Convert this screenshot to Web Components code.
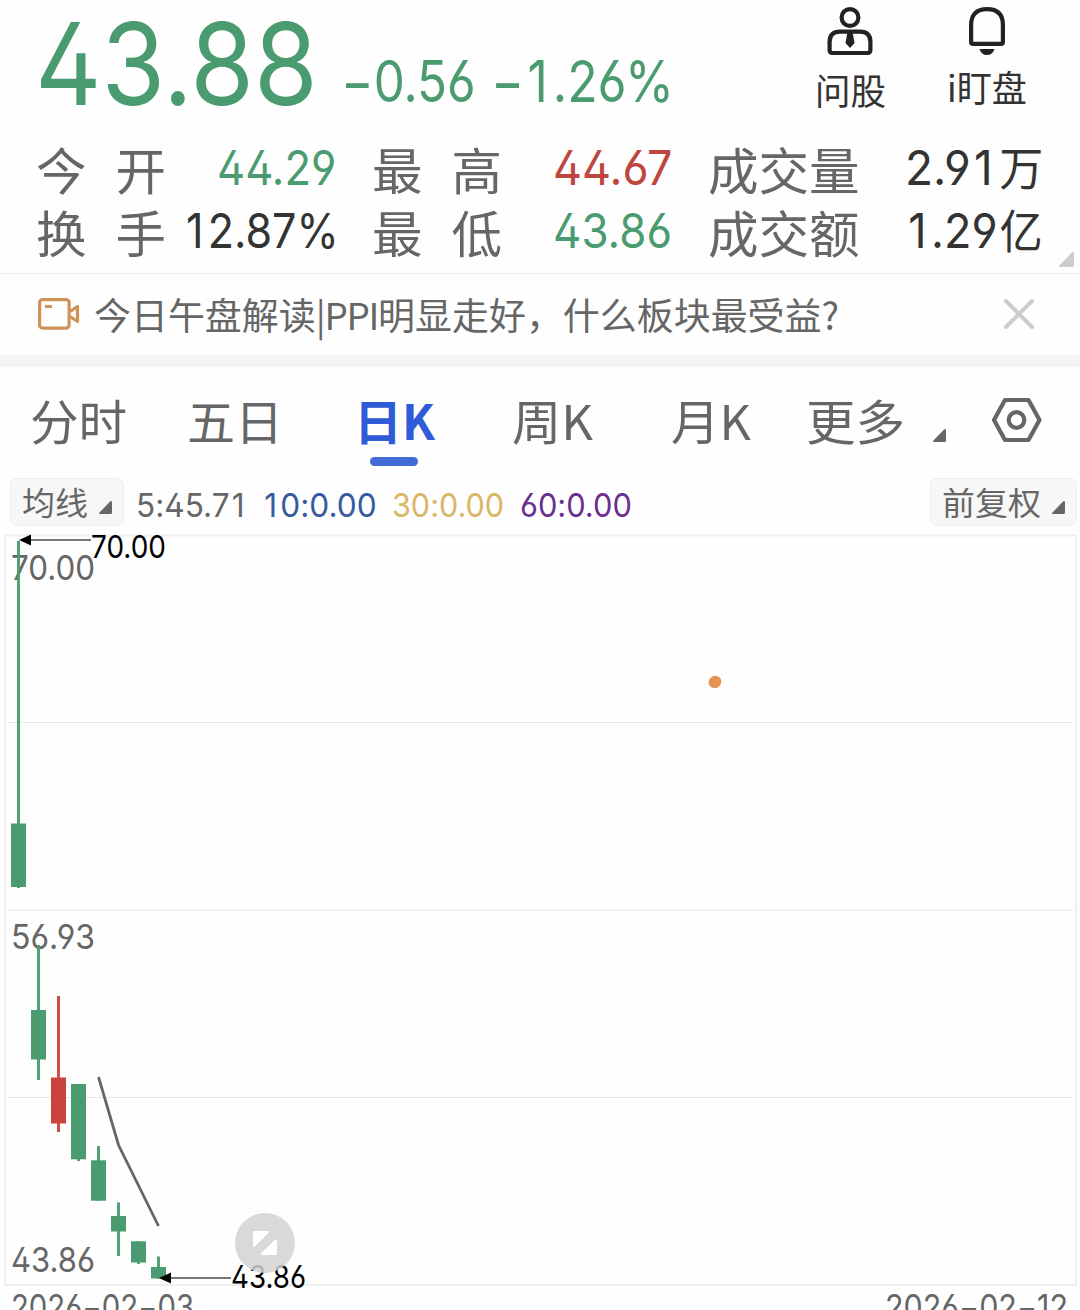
<!DOCTYPE html>
<html lang="zh-CN">
<head>
<meta charset="utf-8">
<meta name="viewport" content="width=1080">
<title>日K</title>
<style>
    :root {
        --up: #bf4640;
        --down: #4b9b70;
        --fg: #333;
        --muted: #666;
        --accent: #2f5bd8;
        --cjk: "Noto Sans CJK SC", sans-serif;
        --num: Inter, "Noto Sans CJK SC", sans-serif;
        --digits: "calt" 0, "cv02", "cv03", "cv04";
    }
    html, body { margin: 0; height: 1310px; overflow: hidden; background: #fefefe; }
    body { font-family: var(--cjk); color: var(--muted); }
</style>
</head>
<body>
<stock-page></stock-page>

<script>
/**
 * <fit-text w="120"> — one line of text, condensed or widened to exactly w pixels.
 * A slotted <i> holds a narrow digit and gets the room of a full one.
 */
class FitText extends HTMLElement {
    connectedCallback() {
        if (this._init) return; this._init = true;
        const root = this.attachShadow({ mode: 'open' });
        const w = Number(this.getAttribute('w'));
        root.innerHTML = `<style>
            :host { display: block; width: ${w}px; white-space: nowrap; line-height: 1; }
            span { display: inline-block; transform-origin: 0 50%; font-feature-settings: var(--digits); }
            ::slotted(i) { font-style: normal; padding: 0 .1em 0 .07em; }
        </style><span><slot></slot></span>`;
        const span = root.querySelector('span');
        span.style.transform = `scaleX(${w / span.offsetWidth})`;
    }
}

/** <corner-mark> — the small triangle that marks something expandable. */
class CornerMark extends HTMLElement {
    connectedCallback() {
        if (this._init) return; this._init = true;
        this.attachShadow({ mode: 'open' }).innerHTML = `<style>
            :host { display: block; width: 13px; height: 13px; }
            svg { display: block; width: 100%; height: 100%; }
        </style>
        <svg viewBox="0 0 13 13"><path d="M11.3.3Q13-.6 13 1.5V11.5Q13 13 11.5 13H1Q-.8 13 .5 11.5Z" fill="currentColor"/></svg>`;
    }
}

/** <quote-header> — last price, change, and the two shortcut buttons. */
class QuoteHeader extends HTMLElement {
    connectedCallback() {
        if (this._init) return; this._init = true;
        this.attachShadow({ mode: 'open' }).innerHTML = `<style>
            :host { display: flex; height: 136px; box-sizing: border-box; padding-left: 35px; color: var(--down);
                font-family: var(--num); }
            .price { font-size: 114px; margin-top: 7px; }
            .chg { font-size: 57px; margin-top: 53px; }
            .a { margin-left: 23px; }
            .b { margin-left: 15px; }
            .btn { color: #222; font: 36px/1 var(--cjk); display: flex; flex-direction: column; align-items: center; }
            .btn svg { display: block; }
            .ask { margin-left: 136px; width: 80px; }
            .watch { margin-left: 54px; width: 86px; }
            .btn fit-text { color: var(--fg); }
            .ask fit-text { margin-top: 11px; }
            .watch fit-text { margin-top: 8px; }
        </style>
        <fit-text class="price" w="283">43.88</fit-text>
        <fit-text class="chg a" w="135">−0.56</fit-text>
        <fit-text class="chg b" w="183">−<i>1</i>.26%</fit-text>
        <div class="btn ask">
            <svg width="50" height="60" viewBox="825 0 50 60" fill="none" stroke="#222" stroke-width="4.2">
                <circle cx="850" cy="17.5" r="8.4"/>
                <path d="M829.6 50V42Q829.6 31.6 840 31.6H860Q870.4 31.6 870.4 42V50Q870.4 53 867.4 53H832.6Q829.6 53 829.6 50Z"/>
                <path d="M847.5 32H852.5L854.5 43 850 48 845.5 43Z" fill="#222" stroke="none"/>
            </svg>
            <fit-text w="71">问股</fit-text>
        </div>
        <div class="btn watch">
            <svg width="50" height="60" viewBox="962 0 50 60" fill="none" stroke="#222" stroke-width="4.2">
                <path d="M971.1 42V25Q971.1 9.2 987 9.2T1002.9 25V42Q1002.9 43.8 1001 43.8H973Q971.1 43.8 971.1 42Z"/>
                <path d="M979.5 49H994.5Q992.500 55 987 55T979.5 49Z" fill="#222" stroke="none"/>
            </svg>
            <fit-text w="80">i盯盘</fit-text>
        </div>`;
    }
}

/** <quote-stats> — two rows of label and value pairs. */
class QuoteStats extends HTMLElement {
    connectedCallback() {
        if (this._init) return; this._init = true;
        this.attachShadow({ mode: 'open' }).innerHTML = `<style>
            :host { display: grid; grid-template: 63px 63px / 336px 336px 335px; height: 138px; box-sizing: border-box;
                padding-left: 36px; border-bottom: 1px solid #ececec; position: relative; }
            div { display: flex; justify-content: space-between; align-items: flex-start; padding-right: 36px; }
            div:nth-of-type(3n) { padding-right: 0; }
            .l { font: 50.5px/1 var(--cjk); margin-top: 7px; word-spacing: 17.7px; }
            .v { font: 48px/1 var(--num); margin-top: 8px; color: var(--fg); }
            .down { color: var(--down); }
            .up { color: var(--up); }
            .pct { margin-right: -3px; }
            small { font: 46px/0 var(--cjk); margin-left: 2px; }
            corner-mark { position: absolute; right: 6px; bottom: 6px; width: 15px; height: 15px; color: #ccc; }
        </style>
        <div><fit-text class="l" w="130">今 开</fit-text><fit-text class="v down" w="119">44.29</fit-text></div>
        <div><fit-text class="l" w="130">最 高</fit-text><fit-text class="v up" w="119">44.67</fit-text></div>
        <div><fit-text class="l" w="152">成交量</fit-text><fit-text class="v" w="138">2.9<i>1</i><small>万</small></fit-text></div>
        <div><fit-text class="l" w="130">换 手</fit-text><fit-text class="v pct" w="156"><i>1</i>2.87%</fit-text></div>
        <div><fit-text class="l" w="130">最 低</fit-text><fit-text class="v down" w="119">43.86</fit-text></div>
        <div><fit-text class="l" w="152">成交额</fit-text><fit-text class="v" w="138"><i>1</i>.29<small>亿</small></fit-text></div>
        <corner-mark></corner-mark>`;
    }
}

/** <news-strip> — one dismissible headline; the headline is slotted. */
class NewsStrip extends HTMLElement {
    connectedCallback() {
        if (this._init) return; this._init = true;
        this.attachShadow({ mode: 'open' }).innerHTML = `<style>
            :host { display: flex; align-items: center; height: 93px; box-sizing: border-box; padding: 0 44px 0 36px;
                border-bottom: 12px solid #f4f4f4; font-size: 37px; }
            svg { margin-bottom: 2px; }
            .x { margin-left: auto; }
            fit-text { margin-left: 14px; }
        </style>
        <svg width="44" height="36" viewBox="36 296 44 36" fill="none" stroke="#cf9358" stroke-width="3.2" stroke-linejoin="round">
            <rect x="39.600" y="299.600" width="29.500" height="28.500" rx="3"/>
            <path d="M45 306.500H52M70 311.500 77.500 306.500V321.500L70 316.500"/>
        </svg>
        <fit-text w="745"><slot></slot></fit-text>
        <svg class="x" width="34" height="34" viewBox="-17 -17 34 34" stroke="#ccc" stroke-width="4" stroke-linecap="round"><path d="M-13-13 13 13M13-13-13 13"/></svg>`;
    }
}

/** <period-tabs> — chart period picker. */
class PeriodTabs extends HTMLElement {
    connectedCallback() {
        if (this._init) return; this._init = true;
        this.attachShadow({ mode: 'open' }).innerHTML = `<style>
            :host { display: grid; grid-template-columns: 157px 167px 158px 159px 135px 127px 57px 60px; height: 111px;
                padding-left: 30px; font-size: 48px; }
            fit-text { margin-top: 28px; }
            .on { color: var(--accent); font-weight: 700; }
            i { display: block; width: 48px; height: 9px; border-radius: 5px; background: #426ad6; margin: 14px 0 0 16px; }
            corner-mark { margin-top: 62px; }
            svg { margin-top: 29px; }
        </style>
        <fit-text w="97">分时</fit-text>
        <fit-text w="96">五日</fit-text>
        <div><fit-text class="on" w="81">日K</fit-text><i></i></div>
        <fit-text w="81">周K</fit-text>
        <fit-text w="80">月K</fit-text>
        <fit-text w="99">更多</fit-text>
        <corner-mark></corner-mark>
        <svg width="52" height="48" viewBox="990 396 52 48" fill="none" stroke="#666" stroke-width="4.2" stroke-linejoin="round">
            <path d="M1005 400H1028.500L1039.500 420 1028.500 440H1005L994 420Z"/><circle cx="1016.500" cy="420" r="7.800"/>
        </svg>`;
    }
}

/** <ma-legend> — moving average values between the two option pills. */
class MaLegend extends HTMLElement {
    connectedCallback() {
        if (this._init) return; this._init = true;
        this.attachShadow({ mode: 'open' }).innerHTML = `<style>
            :host { display: flex; align-items: flex-start; height: 48px; padding: 0 3px 0 10px; font: 33px/1 var(--num); }
            .pill { display: flex; box-sizing: border-box; height: 48px; padding: 6px 11px 0 11px; border: 1px solid #eee;
                border-radius: 7px; background: #f7f7f7; font: 32px/1 var(--cjk); }
            .pill corner-mark { margin: 16px 0 0 11px; }
            .ma { margin: 11px 0 0 15px; }
            .end { margin-left: auto; }
        </style>
        <div class="pill"><fit-text w="66">均线</fit-text><corner-mark></corner-mark></div>
        <fit-text class="ma" style="margin-left:12px" w="112">5:45.7<i>1</i></fit-text>
        <fit-text class="ma" style="margin-left:14px;color:#36599f" w="115"><i>1</i>0:0.00</fit-text>
        <fit-text class="ma" style="margin-left:15px;color:#d9b766" w="112">30:0.00</fit-text>
        <fit-text class="ma" style="margin-left:16px;color:#6b2f8f" w="112">60:0.00</fit-text>
        <div class="pill end"><fit-text w="99">前复权</fit-text><corner-mark></corner-mark></div>`;
    }
}

// x centre, wick top, body top, body bottom, wick bottom, colour
const CANDLES = [
    [18.5, 541, 823.5, 887, 888, 'd'],
    [38.5, 945, 1010, 1059.500, 1080, 'd'],
    [58.5, 996, 1077.500, 1123.500, 1132, 'u'],
    [78.5, 1084, 1084, 1159.300, 1161, 'd'],
    [98.5, 1146, 1160.300, 1200.700, 1200.700, 'd'],
    [118.5, 1202.500, 1216, 1231.500, 1256, 'd'],
    [138.5, 1241.300, 1241.300, 1262.500, 1264, 'd'],
    [158.5, 1256.500, 1267, 1278.500, 1278.500, 'd'],
];

/** <k-chart> — daily candles with the MA5 line, extremes and axis labels. */
class KChart extends HTMLElement {
    connectedCallback() {
        if (this._init) return; this._init = true;
        const candles = CANDLES.map(([x, wt, bt, bb, wb, c]) => `<g class="${c}">
            <rect x="${x - 1.5}" y="${wt}" width="3" height="${wb - wt}" opacity=".95"/>
            <rect x="${x - 7.5}" y="${bt}" width="15" height="${bb - bt}"/></g>`).join('');
        const text = (x, y, w, s, cls = '') =>
            `<text class="${cls}" x="${x}" y="${y}" textLength="${w}" lengthAdjust="spacingAndGlyphs">${s}</text>`;
        this.attachShadow({ mode: 'open' }).innerHTML = `<style>
            :host { display: block; }
            svg { display: block; }
            text { font: 34px var(--num); fill: #666; font-feature-settings: var(--digits); }
            .ext { font-size: 31px; fill: #000; }
            .d { fill: #4a9b6f; }
            .u { fill: #cb433d; }
        </style>
        <svg width="1080" height="784" viewBox="0 526 1080 784">
            <path d="M8 722.500H1073M8 1097.500H1073" stroke="#e6e6e6"/>
            <path d="M8 910H1073" stroke="#f0f0f0" stroke-width="2"/>
            <path d="M5 535.500H1076V1285H5Z" fill="none" stroke="#f0f0f0" stroke-width="2"/>
            ${text(11, 579.500, 84, '70.00')}
            ${text(11, 948.500, 84, '56.93')}
            ${text(11, 1271.500, 84, '43.86')}
            ${candles}
            <path d="M98.500 1077 118.500 1145 158.500 1226" fill="none" stroke="#666" stroke-width="2.800"/>
            <path d="M30 540H91M170 1278H231" stroke="#777" stroke-width="2"/>
            <path d="M19 540 31 534.500V545.500ZM159 1278 171 1272.500V1283.500Z"/>
            ${text(91, 558, 75, '70.00', 'ext')}
            ${text(231, 1288, 75, '43.86', 'ext')}
            <circle cx="265" cy="1243" r="30" fill="#d2d2d2" fill-opacity=".85"/>
            <path d="M254 1231H267.500Q270 1231 268.500 1233L255.500 1246Q253 1248 253 1245V1232Q253 1231 254 1231ZM276 1255H262.500Q260 1255 261.500 1253L274.500 1240Q277 1238 277 1241V1254Q277 1255 276 1255Z" fill="#fff"/>
            <ellipse cx="715" cy="682" rx="6.500" ry="6" transform="rotate(-35 715 682)" fill="#e39455"/>
            ${text(11, 1319, 183, '2026−02−03')}
            ${text(885, 1319, 183, '2026−02−12')}
        </svg>`;
    }
}

/** <stock-page> — stacks the sections of the quote screen. */
class StockPage extends HTMLElement {
    connectedCallback() {
        if (this._init) return; this._init = true;
        this.attachShadow({ mode: 'open' }).innerHTML = `<style>
            :host { display: flex; flex-direction: column; width: 1080px; height: 1310px; overflow: hidden; }
            :host > * { flex-shrink: 0; }
            b { font-weight: inherit; letter-spacing: -1.3px; }
        </style>
        <quote-header></quote-header>
        <quote-stats></quote-stats>
        <news-strip>今日午盘解读<b>|PPI</b>明显走好，什么板块最受益?</news-strip>
        <period-tabs></period-tabs>
        <ma-legend></ma-legend>
        <k-chart></k-chart>`;
    }
}

customElements.define('fit-text', FitText);
customElements.define('corner-mark', CornerMark);
customElements.define('quote-header', QuoteHeader);
customElements.define('quote-stats', QuoteStats);
customElements.define('news-strip', NewsStrip);
customElements.define('period-tabs', PeriodTabs);
customElements.define('ma-legend', MaLegend);
customElements.define('k-chart', KChart);
customElements.define('stock-page', StockPage);
</script>
</body>
</html>
